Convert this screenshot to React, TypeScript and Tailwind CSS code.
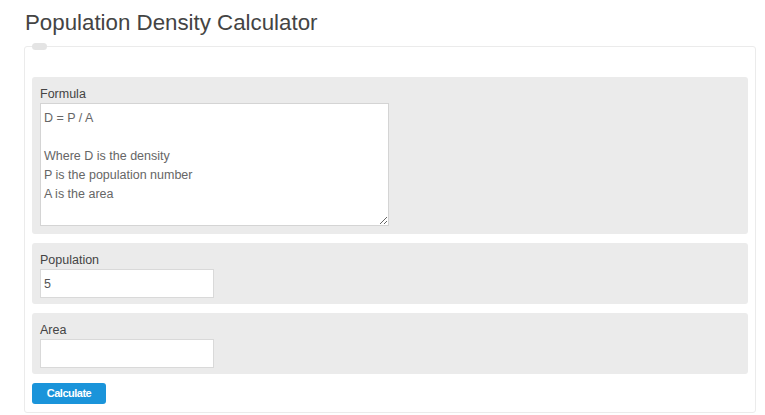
import React, { useState } from "react";

const formula = `D = P / A

Where D is the density
P is the population number
A is the area`;

function Field(props: { label: string; children: React.ReactNode }) {
  return (
    <div className="bg-[#ebebeb] rounded-[3px] px-[8px] pt-[9px] pb-[6px]">
      <label className="block text-[12.5px] leading-[16px] text-[#444] mb-[1px]">
        {props.label}
      </label>
      {props.children}
    </div>
  );
}

export default function App() {
  const [population, setPopulation] = useState("5");
  const [area, setArea] = useState("");

  return (
    <div
      className="w-[765px] h-[415px] bg-white overflow-hidden"
      style={{ fontFamily: '"Liberation Sans", Arial, sans-serif' }}
    >
      <h1 className="pl-[25px] pt-[10px] text-[22.3px] leading-[25px] font-normal text-[#444]">
        Population Density Calculator
      </h1>

      <div className="relative ml-[24px] mt-[11px] w-[732px] border border-[#ebebeb] rounded-[3px] px-[7px] pt-[30px] pb-[8px]">
        <span className="absolute left-[7px] top-[-4px] w-[15px] h-[7px] rounded-full bg-[#e4e4e4]"></span>

        <div className="flex flex-col gap-[9px]">
          <div className="bg-[#ebebeb] rounded-[3px] px-[8px] pt-[9px] pb-[8px]">
            <label className="block text-[12.5px] leading-[16px] text-[#444] mb-[1px]">Formula</label>
            <textarea
              className="block w-[349px] h-[123px] bg-white border border-[#d4d4d4] px-[3px] pt-[5px] text-[12.5px] leading-[19px] text-[#666] outline-none resize"
              defaultValue={formula}
              readOnly
            />
          </div>

          <Field label="Population">
            <input
              type="text"
              className="block w-[174px] h-[29px] bg-white border border-[#d9d9d9] px-[3px] text-[12.5px] text-[#555] outline-none"
              value={population}
              onChange={(e) => setPopulation(e.target.value)}
            />
          </Field>

          <Field label="Area">
            <input
              type="text"
              className="block w-[174px] h-[29px] bg-white border border-[#d9d9d9] px-[3px] text-[12.5px] text-[#555] outline-none"
              value={area}
              onChange={(e) => setArea(e.target.value)}
            />
          </Field>

          <button className="block w-[74px] h-[21px] rounded-[3px] bg-[#1a94da] text-white text-[11px] font-bold tracking-[-0.5px] leading-[21px]">
            Calculate
          </button>
        </div>
      </div>
    </div>
  );
}
